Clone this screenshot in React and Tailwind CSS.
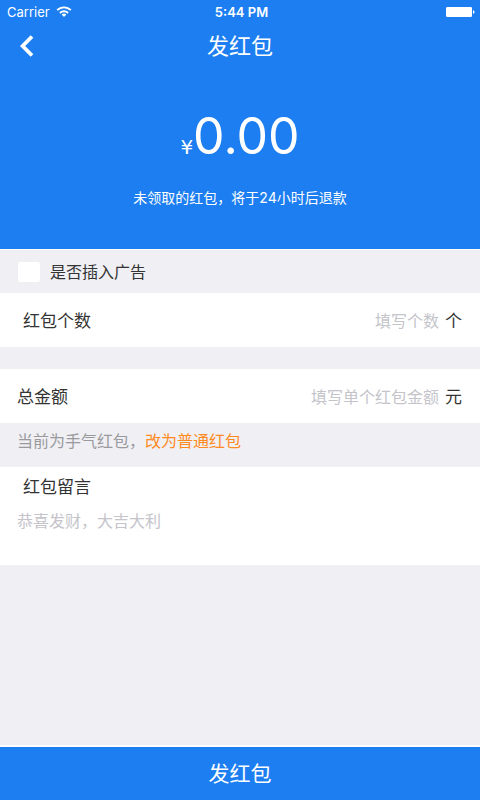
// src/pages/SendRedPacketPage.jsx

import React, { useState } from 'react';

const StatusBar = () => (
  <div className="grid grid-cols-3 items-center h-6 pl-[7px] pr-1 text-[13px] leading-6">
    <div className="flex items-center gap-1.5">
      <span>Carrier</span>
      <svg className="w-4 h-3" viewBox="0 0 16 12" fill="none" stroke="currentColor" strokeWidth="1.9">
        <path d="M1.2 4.2a9.6 9.6 0 0 1 13.6 0" />
        <path d="M3.9 7a5.8 5.8 0 0 1 8.2 0" />
        <path d="M8 11 5.6 8.6a3.4 3.4 0 0 1 4.8 0z" fill="currentColor" stroke="none" />
      </svg>
    </div>
    <span className="text-center font-semibold">5:44 PM</span>
    <svg className="w-[30px] h-3 justify-self-end" viewBox="0 0 30 12" fill="currentColor">
      <rect x="0" y="1" width="26" height="10" rx="1.2" />
      <path d="M27 4.2c2 .4 2 3.2 0 3.6z" />
    </svg>
  </div>
);

const AmountRow = ({ id, label, placeholder, unit, value, onChange, labelClass }) => (
  <div className="flex items-baseline h-[54px] pt-4 pr-[18px] bg-white text-[17px] leading-6">
    <label htmlFor={id} className={labelClass}>{label}</label>
    <input
      id={id}
      name={id}
      type="text"
      inputMode="decimal"
      value={value}
      onChange={onChange}
      placeholder={placeholder}
      className="flex-1 min-w-0 mr-1.5 text-right text-base leading-6 outline-none placeholder:text-[#c4c4ca]"
    />
    <span>{unit}</span>
  </div>
);

const App = () => {
  const [formData, setFormData] = useState({ count: '', amount: '', message: '' });
  const [withAd, setWithAd] = useState(false);
  const [isLucky, setIsLucky] = useState(true);

  const handleChange = (e) => {
    setFormData({ ...formData, [e.target.name]: e.target.value });
  };

  const total = Number(formData.amount) || 0;

  return (
    <form
      onSubmit={(e) => e.preventDefault()}
      className="flex flex-col min-h-screen bg-[#efeff4] text-[#333333] font-[Inter,'Noto_Sans_CJK_SC',sans-serif]"
    >
      <header className="h-[250px] bg-[#1c7ef0] text-white border-b border-white">
        <StatusBar />
        <div className="grid grid-cols-3 items-center h-11 px-4">
          <button type="button" aria-label="返回" className="justify-self-start p-1">
            <svg className="w-[14px] h-6" viewBox="0 0 14 24" fill="none" stroke="currentColor" strokeWidth="3.8">
              <path d="M12 2.5 2.6 12 12 21.5" />
            </svg>
          </button>
          <h1 className="text-center text-[22px] leading-8">发红包</h1>
        </div>
        <div className="flex items-baseline justify-center mt-9 leading-16">
          <span className="font-['DejaVu_Sans',sans-serif] text-xl">¥</span>
          <span className="text-[50px] leading-16">{total.toFixed(2)}</span>
        </div>
        <p className="mt-5 text-center text-sm">未领取的红包，将于24小时后退款</p>
      </header>

      <label className="flex items-center gap-2.5 h-[43px] px-[18px] text-base">
        <input
          type="checkbox"
          checked={withAd}
          onChange={(e) => setWithAd(e.target.checked)}
          className="appearance-none w-[22px] h-5 rounded-xs bg-white checked:bg-[#1c7ef0]"
        />
        是否插入广告
      </label>

      <AmountRow
        id="count"
        label="红包个数"
        placeholder="填写个数"
        unit="个"
        value={formData.count}
        onChange={handleChange}
        labelClass="pl-[23px]"
      />
      <div className="h-[22px]" />
      <AmountRow
        id="amount"
        label="总金额"
        placeholder="填写单个红包金额"
        unit="元"
        value={formData.amount}
        onChange={handleChange}
        labelClass="pl-[17px]"
      />

      <p className="h-11 px-[17px] pt-1.5 text-base text-[#9a9a9e]">
        {isLucky ? '当前为手气红包，' : '当前为普通红包，'}
        <button type="button" onClick={() => setIsLucky(!isLucky)} className="text-[#ff8a1e]">
          {isLucky ? '改为普通红包' : '改为手气红包'}
        </button>
      </p>

      <div className="h-[98px] pt-2 bg-white">
        <label htmlFor="message" className="block pl-[23px] text-[17px] leading-6">红包留言</label>
        <textarea
          id="message"
          name="message"
          rows="2"
          value={formData.message}
          onChange={handleChange}
          placeholder="恭喜发财，大吉大利"
          className="block w-full mt-2.5 px-[17px] text-base resize-none outline-none placeholder:text-[#c4c4ca]"
        />
      </div>

      <button type="submit" className="mt-auto h-[55px] border-t-2 border-white bg-[#1c7ef0] text-[21px] text-white">
        发红包
      </button>
    </form>
  );
};

export default App;
